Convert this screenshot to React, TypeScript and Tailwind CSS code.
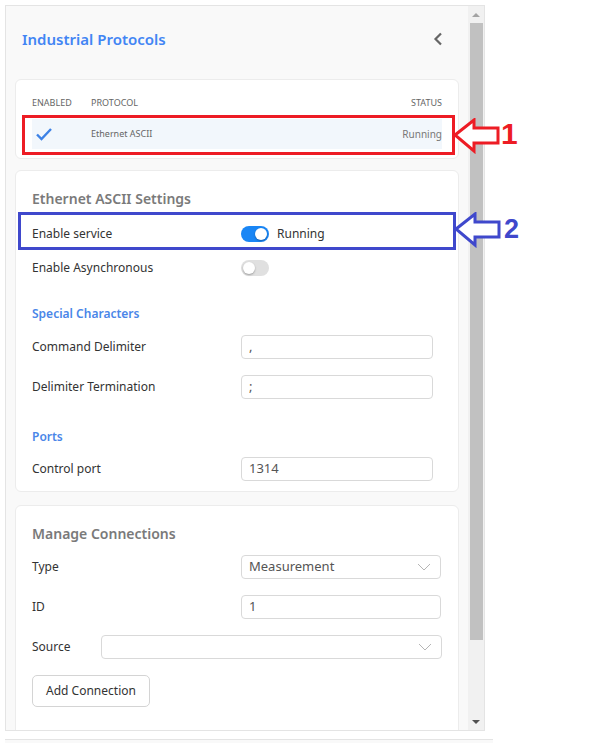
import React from 'react';

const Toggle: React.FC<{ on: boolean }> = ({ on }) => (
  <div className={`relative w-[28px] h-[16px] rounded-full ${on ? 'bg-[#1a86f5]' : 'bg-[#e0e0e0]'}`}>
    <div className={`absolute top-[2px] w-[12px] h-[12px] rounded-full bg-white shadow-[0_1px_2px_rgba(0,0,0,0.3)] ${on ? 'left-[14px]' : 'left-[2px]'}`}></div>
  </div>
);

const Chevron: React.FC = () => (
  <svg width="14" height="8" viewBox="0 0 14 8" className="text-[#b5b5b5]">
    <path d="M1 1 L7 7 L13 1" fill="none" stroke="currentColor" strokeWidth="1" />
  </svg>
);

const TextBox: React.FC<{ value: string; wide?: boolean }> = ({ value, wide }) => (
  <div className={`h-[24px] ${wide ? 'w-[200px]' : 'w-[192px]'} border border-[#d9d9d9] rounded-[4px] bg-white flex items-center px-[7px] text-[13px] text-[#555]`}>
    {value}
  </div>
);

const Row: React.FC<{ label: string; children: React.ReactNode; className?: string }> = ({ label, children, className }) => (
  <div className={`flex items-center h-[24px] ${className || ''}`}>
    <div className="w-[209px] text-[12px] text-[#333]">{label}</div>
    {children}
  </div>
);

const Arrow: React.FC<{ color: string }> = ({ color }) => (
  <svg width="48" height="36" viewBox="0 0 48 36">
    <polygon points="2,17 21,2 21,10 45,10 45,25 21,25 21,33" fill="white" stroke={color} strokeWidth="3" />
  </svg>
);

export default function App() {
  return (
    <div className="relative w-[597px] h-[743px] bg-white overflow-hidden font-['Noto_Sans',sans-serif]">
      <div className="ml-[5px] mt-[5px] w-[480px] h-[726px] border border-[#e4e4e4] bg-[#f9f9f9] flex overflow-hidden">
        <div className="flex-1 px-[9px] overflow-hidden">
          <div className="h-[66px] flex items-center justify-between pl-[7px] pr-[16px] mb-[7px]">
            <h1 className="text-[15px] font-semibold text-[#4285f4]">Industrial Protocols</h1>
            <svg width="10" height="14" viewBox="0 0 10 14">
              <path d="M8 1.5 L2.5 7 L8 12.5" fill="none" stroke="#666" strokeWidth="2.2" />
            </svg>
          </div>

          <div className="bg-white border border-[#ececec] rounded-[6px] h-[80px] px-[16px] pt-[16px]">
            <div className="flex items-center h-[14px] text-[9px] text-[#666] uppercase">
              <span className="w-[59px]">Enabled</span>
              <span className="flex-1">Protocol</span>
              <span>Status</span>
            </div>
            <div className="mt-[9px] h-[30px] bg-[#f2f7fc] flex items-center text-[9px] text-[#666]">
              <svg width="18" height="14" viewBox="0 0 18 14" className="ml-[3px] mr-[38px]">
                <path d="M2 7.5 L6.5 12 L16 2" fill="none" stroke="#3d82e6" strokeWidth="2.4" />
              </svg>
              <span className="flex-1">Ethernet ASCII</span>
              <span className="text-[10px] text-[#777]">Running</span>
            </div>
          </div>

          <div className="mt-[11px] bg-white border border-[#ececec] rounded-[6px] h-[322px] px-[16px] pt-[17px]">
            <div className="h-[20px] flex items-center text-[14px] font-semibold text-[#7a7a7a]">Ethernet ASCII Settings</div>
            <Row label="Enable service" className="mt-[14px]">
              <Toggle on />
              <span className="ml-[8px] text-[12px] text-[#333]">Running</span>
            </Row>
            <Row label="Enable Asynchronous" className="mt-[10px]">
              <Toggle on={false} />
            </Row>
            <div className="mt-[25px] h-[18px] flex items-center text-[12px] font-semibold text-[#4a86e8]">Special Characters</div>
            <Row label="Command Delimiter" className="mt-[12px]">
              <TextBox value="," />
            </Row>
            <Row label="Delimiter Termination" className="mt-[16px]">
              <TextBox value=";" />
            </Row>
            <div className="mt-[29px] h-[18px] flex items-center text-[12px] font-semibold text-[#4a86e8]">Ports</div>
            <Row label="Control port" className="mt-[11px]">
              <TextBox value="1314" />
            </Row>
          </div>

          <div className="mt-[13px] bg-white border border-[#ececec] rounded-[6px] h-[260px] px-[16px] pt-[17px]">
            <div className="h-[20px] flex items-center text-[14px] font-semibold text-[#7a7a7a]">Manage Connections</div>
            <Row label="Type" className="mt-[12px]">
              <div className="h-[24px] w-[200px] border border-[#d9d9d9] rounded-[4px] bg-white flex items-center justify-between pl-[7px] pr-[9px] text-[13px] text-[#555]">
                <span>Measurement</span>
                <Chevron />
              </div>
            </Row>
            <Row label="ID" className="mt-[16px]">
              <TextBox value="1" wide />
            </Row>
            <div className="flex items-center h-[24px] mt-[16px]">
              <div className="w-[69px] text-[12px] text-[#333]">Source</div>
              <div className="h-[24px] flex-1 border border-[#d9d9d9] rounded-[4px] bg-white flex items-center justify-end pr-[9px]">
                <Chevron />
              </div>
            </div>
            <button className="mt-[16px] h-[32px] w-[118px] border border-[#d4d4d4] rounded-[5px] bg-white text-[12px] text-[#333]">Add Connection</button>
          </div>
        </div>

        <div className="w-[16px] bg-[#f1f1f1] flex flex-col items-center">
          <div className="h-[17px] flex items-center justify-center">
            <div className="w-0 h-0 border-l-[4px] border-r-[4px] border-b-[4px] border-l-transparent border-r-transparent border-b-[#a3a3a3]"></div>
          </div>
          <div className="w-[13px] h-[617px] bg-[#c1c1c1]"></div>
          <div className="flex-1 flex items-end pb-[6px]">
            <div className="w-0 h-0 border-l-[4px] border-r-[4px] border-t-[4px] border-l-transparent border-r-transparent border-t-[#505050]"></div>
          </div>
        </div>
      </div>
      <div className="ml-[5px] mt-[8px] w-[488px] h-[10px] border-t border-[#e4e4e4] bg-[#f9f9f9]"></div>

      <div className="absolute left-[22px] top-[115px] w-[433px] h-[40px] border-[3px] border-[#ed1c24]"></div>
      <div className="absolute left-[453px] top-[118px]"><Arrow color="#ed1c24" /></div>
      <div className="absolute left-[501px] top-[116px] text-[30px] leading-[36px] font-bold text-[#ed1c24] font-['Liberation_Sans',sans-serif]">1</div>

      <div className="absolute left-[18px] top-[212px] w-[438px] h-[38px] border-[3px] border-[#3f48cc]"></div>
      <div className="absolute left-[454px] top-[212px]"><Arrow color="#3f48cc" /></div>
      <div className="absolute left-[504px] top-[211px] text-[27px] leading-[36px] font-bold text-[#3f48cc] font-['Liberation_Sans',sans-serif]">2</div>
    </div>
  );
}
